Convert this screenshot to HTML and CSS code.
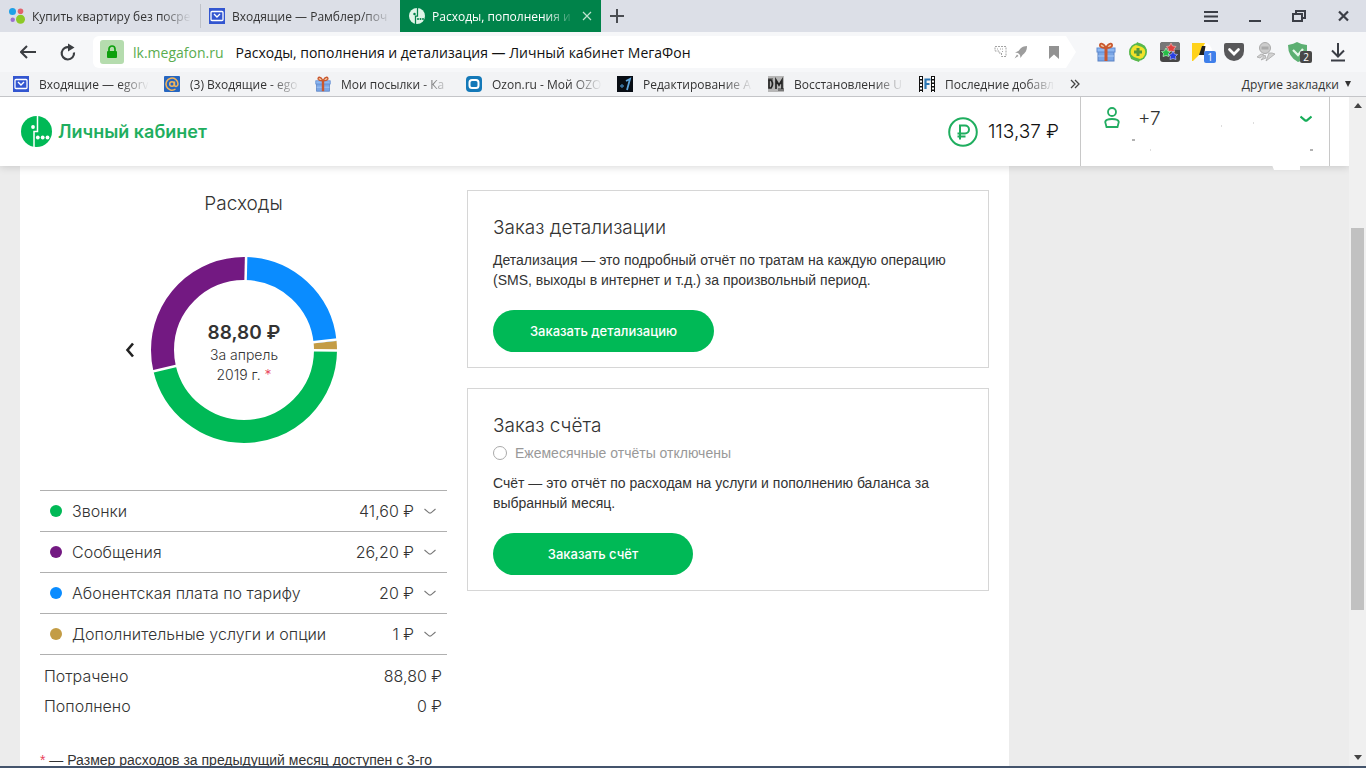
FILE: index.html
```html
<!DOCTYPE html>
<html lang="ru">
<head>
<meta charset="utf-8">
<meta name="viewport" content="width=device-width, initial-scale=1">
<title>Расходы, пополнения и детализация — Личный кабинет МегаФон</title>
<link rel="stylesheet" href="styles.css">
</head>
<body>
<svg class="defs" width="0" height="0" aria-hidden="true">
  <symbol id="mail" viewBox="0 0 16 16"><rect width="16" height="16" fill="#3356d0"/><rect x="2" y="3.500" width="12" height="9" rx="1" fill="none" stroke="#fff" stroke-width="1.300"/><path d="M5 6l3 3 3-3" fill="none" stroke="#fff" stroke-width="1.400"/></symbol>
  <symbol id="gift" viewBox="0 0 20 20"><rect x="2" y="9" width="16" height="10" fill="#7aa6e6" stroke="#5b82c4"/><rect x="1" y="6" width="18" height="4" fill="#8db8f2" stroke="#5f8ad0"/><path d="M2 14h16" stroke="#a9cbf7"/><path d="M10 6v13" stroke="#c9572e" stroke-width="3"/><path d="M10 6C7 0 3 1 4 4c1 2 4 2 6 2s5 0 6-2c1-3-3-4-6 2z" fill="#f4c9a0" stroke="#c9572e" stroke-width="1.700"/></symbol>
  <symbol id="down" viewBox="0 0 12 8"><path d="M.5 2L5 5.800Q6 6.500 7 5.800L11.500 2" fill="none" stroke="currentColor" stroke-width="1.100"/></symbol>
</svg>

<div class="tabs">
  <a class="tab" href="#"><svg class="fav" viewBox="0 0 16 16"><circle cx="3.500" cy="3.500" r="3.500" fill="#1ea0e6"/><circle cx="11.500" cy="3.300" r="2.800" fill="#e2636c"/><circle cx="3.700" cy="11.800" r="2.200" fill="#9b6fd0"/><circle cx="11.500" cy="11.300" r="4.500" fill="#8dc926"/></svg><span class="fade">Купить квартиру без посре</span></a>
  <a class="tab tab-line" href="#"><svg class="fav"><use href="#mail"/></svg><span class="fade">Входящие — Рамблер/поч</span></a>
  <div class="tab tab-on"><svg class="fav" viewBox="0 0 32 32"><circle cx="16" cy="16" r="16" fill="#dff5e8"/><path d="M17 0v16h-4v16" fill="none" stroke="#00834a" stroke-width="2.500"/><g fill="#00834a"><circle cx="11" cy="12" r="2.500"/><circle cx="18" cy="22" r="2"/><circle cx="23" cy="22" r="2"/><circle cx="28" cy="22" r="2"/></g></svg><span class="fade">Расходы, пополнения и</span><button class="plain" aria-label="Закрыть вкладку"><svg width="10" height="10" viewBox="0 0 10 10"><path d="M1 1l8 8M9 1L1 9" stroke="#bfe3cf" stroke-width="1.200"/></svg></button></div>
  <button class="plain new-tab" aria-label="Новая вкладка"><svg width="14" height="14" viewBox="0 0 14 14"><path d="M7 0v14M0 7h14" stroke="#4a4d52" stroke-width="2"/></svg></button>
  <div class="window-buttons">
    <button class="plain" aria-label="Меню"><svg width="16" height="14" viewBox="0 0 16 14"><path d="M1 3h14M1 7.500h14M1 12h14" stroke="#3b3e46" stroke-width="1.800"/></svg></button>
    <button class="plain" aria-label="Свернуть"><svg width="16" height="14" viewBox="0 0 16 14"><path d="M2 12h12" stroke="#3b3e46" stroke-width="2"/></svg></button>
    <button class="plain" aria-label="Восстановить"><svg width="16" height="14" viewBox="0 0 16 14"><path d="M2 5h9v7H2zM5 5V2h9v7h-3" fill="none" stroke="#3b3e46" stroke-width="2"/></svg></button>
    <button class="plain" aria-label="Закрыть"><svg width="16" height="14" viewBox="0 0 16 14"><path d="M4 2.500l9 9M13 2.500l-9 9" stroke="#3b3e46" stroke-width="2.200"/></svg></button>
  </div>
</div>

<div class="toolbar">
  <button class="plain" aria-label="Назад"><svg width="18" height="16" viewBox="0 0 18 16"><path d="M16 8H1M7 2L1 8l6 6" fill="none" stroke="#3b3e42" stroke-width="2"/></svg></button>
  <button class="plain reload" aria-label="Обновить"><svg width="16" height="18" viewBox="0 0 16 18"><path d="M9.500 4.300A6.200 6.200 0 1 0 14 9.500" fill="none" stroke="#3b3e42" stroke-width="2.200"/><path d="M8 .5L14.500 4.500 8 8.500z" fill="#3b3e42"/></svg></button>
  <div class="address">
    <span class="lock"><svg width="12" height="14" viewBox="0 0 12 14"><rect x="1" y="6" width="10" height="7" rx="1" fill="#0da00d"/><path d="M3 7V4a3 3 0 0 1 6 0v3" fill="none" stroke="#0da00d" stroke-width="1.700"/></svg></span>
    <label class="host" for="addr">lk.megafon.ru</label>
    <input id="addr" type="text" value="Расходы, пополнения и детализация — Личный кабинет МегаФон">
    <svg width="14" height="14" viewBox="0 0 14 14" fill="none" stroke="#a3a3a3"><path d="M1 1.500h11v10H7.500V8H5V6H1z" stroke-dasharray="2 1"/><path d="M3 4h2M6 4h4M8 6.500h2" stroke-dasharray="1 1"/></svg>
    <svg width="14" height="14" viewBox="0 0 14 14" fill="#9d9d9d"><path d="M13 1C8 1 6 4 4.500 6L1 7.500l3 .5 2 2 .5 3L8.500 10C11 8 13 6 13 1zM3 9.500L.5 13.500 4.500 11z"/></svg>
    <svg class="flag" width="10" height="14" viewBox="0 0 10 14"><path d="M0 1h10v13L5 9.500 0 14z" fill="#929292"/></svg>
  </div>
  <div class="extensions">
    <button class="plain" aria-label="Посылки"><svg width="20" height="20"><use href="#gift"/></svg></button>
    <button class="plain" aria-label="Монета"><svg width="20" height="20" viewBox="0 0 20 20"><circle cx="10" cy="10" r="9" fill="#58b84c"/><circle cx="10" cy="10" r="7.300" fill="#f2e22a"/><path d="M9 0L17 4 19 9 14 5 8 3zM11 20L3 17 1 11l5 4 6 2z" fill="#58b84c"/><path d="M10 6v8M6 10h8" stroke="#53983c" stroke-width="3"/></svg></button>
    <button class="plain" aria-label="Звёзды"><svg width="20" height="20" viewBox="0 0 20 20"><rect width="20" height="20" rx="3" fill="#464646"/><path d="M0 3a3 3 0 0 1 3-3h14a3 3 0 0 1 3 3v5H0z" fill="#777"/><path d="M11 1l1.500 3 3.500.5-2 2.500.5 3-3.500-1-3 1 .5-3-2-2.500L9.500 4z" fill="#e1413f" stroke="#ffc1bd" stroke-width=".6"/><path d="M6 6l1.500 3 3 .5-2 2 .5 3-3-1-3 1 .5-3-2-2 3-.5z" fill="#25bd46" stroke="#d1ffd8" stroke-width=".6"/><path d="M13 9l1.500 3 3 .5-2 2 .5 3-3-1-3 1 .5-3-2-2 3-.5z" fill="#273ee3" stroke="#cbd0ff" stroke-width=".6"/></svg></button>
    <button class="plain badge-box" aria-label="Музыка"><svg width="20" height="20" viewBox="0 0 20 20"><circle cx="12" cy="9" r="8" fill="#fff"/><path d="M0 1h13L8 12 1 19H0z" fill="#ffd21c"/><path d="M10 4h3.500l-1.500 9H7z" fill="#222"/></svg><span class="badge">1</span></button>
    <button class="plain" aria-label="Pocket"><svg width="20" height="20" viewBox="0 0 20 20"><path d="M2 1h16q2 0 2 2v6a10 10 0 0 1-20 0V3q0-2 2-2z" fill="#58585a"/><path d="M5.500 7.500L10 12l4.500-4.500" fill="none" stroke="#fff" stroke-width="2.700" stroke-linecap="round"/></svg></button>
    <button class="plain" aria-label="Помощник"><svg width="20" height="20" viewBox="0 0 20 20"><circle cx="9" cy="6" r="5.500" fill="#ccc" stroke="#aaa"/><path d="M5.500 4.500h7v3h-7z" fill="#aaa"/><path d="M5 12l-4 3 3 1 4-3zM9 13l-4 5 5-2zM13 11l-3 8 9-7-3-1z" fill="#d2d2d2" stroke="#aaa" stroke-width=".8"/></svg></button>
    <button class="plain badge-box" aria-label="Защита"><svg width="20" height="20" viewBox="0 0 20 20"><path d="M0 3Q6 2 9 0q5 3 10 3v6q-2 9-9 11Q0 15 0 3z" fill="#5caf72"/><path d="M5 8l5 5 5-6" fill="none" stroke="#e5f6e9" stroke-width="2.200"/></svg><span class="badge badge-dark">2</span></button>
    <button class="plain downloads" aria-label="Загрузки"><svg width="16" height="20" viewBox="0 0 16 20"><path d="M8 1v13M2 8.500L8 14.500 14 8.500M1 18.500h14" fill="none" stroke="#3b3e46" stroke-width="2"/></svg></button>
  </div>
</div>

<div class="bookmarks">
  <a class="mark" href="#"><svg class="fav"><use href="#mail"/></svg><span class="fade">Входящие — egorv</span></a>
  <a class="mark" href="#"><svg class="fav" viewBox="0 0 16 16"><rect width="16" height="16" rx="1" fill="#2666c0"/><g fill="none" stroke="#f3b55a" stroke-width="1.500"><circle cx="8" cy="8" r="2.300"/><path d="M10.500 5.500V9q0 1.500 1.500 1.500 2-.500 2-2.500A6 6 0 1 0 11.500 13"/></g></svg><span class="fade">(3) Входящие - ego</span></a>
  <a class="mark" href="#"><svg class="fav"><use href="#gift"/></svg><span class="fade">Мои посылки - Ка</span></a>
  <a class="mark" href="#"><svg class="fav" viewBox="0 0 16 16"><rect width="16" height="16" rx="4" fill="#1479b8"/><rect x="3.500" y="4" width="9" height="8" rx="2.500" fill="#1479b8" stroke="#fff" stroke-width="2"/></svg><span class="fade">Ozon.ru - Мой OZO</span></a>
  <a class="mark" href="#"><svg class="fav" viewBox="0 0 16 16"><rect width="16" height="16" fill="#080d14"/><path d="M9 5l4-2-3 11" fill="none" stroke="#5fa5dc" stroke-width="1.800"/><path d="M3 10h4M5 8v4" stroke="#3d78a8" stroke-width="1.300"/></svg><span class="fade">Редактирование A</span></a>
  <a class="mark" href="#"><svg class="fav" viewBox="0 0 16 16"><rect width="16" height="16" fill="#b7b7b7"/><path d="M0 2h5v3H0zM10 12h6v3h-6z" fill="#777"/><path d="M1 4v8h2q3-4 0-8zM8 13V4l3 5 3-5v9" fill="none" stroke="#252525" stroke-width="1.700"/></svg><span class="fade">Восстановление U</span></a>
  <a class="mark" href="#"><svg class="fav" viewBox="0 0 16 16"><path d="M0 0h4v16H0zM12 0h4v16h-4z" fill="#111"/><path d="M2 1v15M14 1v15" stroke="#fff" stroke-width="2" stroke-dasharray="2 1.500"/><path d="M6.500 13V3.500h5M6.500 8h4" fill="none" stroke="#2b77b4" stroke-width="2.200"/></svg><span class="fade">Последние добавл</span></a>
  <button class="plain" aria-label="Ещё закладки"><svg width="10" height="10" viewBox="0 0 10 10"><path d="M1 1l4 4-4 4M5 1l4 4-4 4" fill="none" stroke="#444" stroke-width="1.300"/></svg></button>
  <button class="plain other">Другие закладки <svg width="6" height="6" viewBox="0 0 6 6"><path d="M0 0h6L3 6z" fill="#333"/></svg></button>
</div>

<div class="viewport">
  <div class="page">
    <header class="header">
      <a class="brand" href="#"><svg width="31" height="31" viewBox="0 0 31 31"><circle cx="15.500" cy="15.500" r="15.500" fill="#00b956"/><path d="M16.500 0v15.500H13V31" fill="none" stroke="#fff" stroke-width="1.500"/><g fill="#fff"><circle cx="12" cy="11" r="1.900"/><circle cx="16.800" cy="21.500" r="1.900"/><circle cx="21.700" cy="21.500" r="1.900"/><circle cx="26.500" cy="21.500" r="1.900"/></g></svg>Личный кабинет</a>
      <div class="balance"><svg width="30" height="30" viewBox="0 0 30 30" fill="none" stroke="#1fae5f"><circle cx="15" cy="15" r="13.800" stroke-width="2"/><path d="M12 22.500V8.500h5a4 4 0 0 1 0 8H9.500M9.500 19.500h8" stroke-width="2"/></svg>113,37 ₽</div>
      <button class="plain user"><svg width="16" height="21" viewBox="0 0 16 21" fill="none" stroke="#23ad62" stroke-width="1.800"><circle cx="8" cy="5" r="4"/><path d="M2.500 20L1.200 15q.5-3 6.800-3t6.800 3l-1.300 5z"/></svg><span>+7</span><svg class="user-arrow" width="12" height="8" viewBox="0 0 12 8"><path d="M.5 1.500L5 5.300Q6 6.100 7 5.300L11.500 1.500" fill="none" stroke="#16ad59" stroke-width="2.200"/></svg>
        <svg class="specks" viewBox="0 0 248 74" aria-hidden="true"><path d="M191 68h28v5h-26z" fill="#fff"/><path d="M51 43h3M229 53h3" stroke="#999" stroke-width="1.300"/><path d="M140 29h1M172 26h1M69 53h1" stroke="#bbb"/></svg></button>
    </header>

    <main class="content">
      <section class="costs">
        <h2>Расходы</h2>
        <div class="chart-row">
          <button class="plain prev" aria-label="Предыдущий месяц"><svg width="10" height="16" viewBox="0 0 10 16"><path d="M8 1.500L2.500 8 8 14.500" fill="none" stroke="#222" stroke-width="2.600"/></svg></button>
          <div class="donut">
            <svg viewBox="0 0 186 186" role="img" aria-label="Расходы по категориям">
              <g fill="none" stroke-width="23" transform="rotate(-90 93 93)">
                <circle cx="93" cy="93" r="81.500" pathLength="360" stroke="#731982" stroke-dasharray="104.500 255.500" stroke-dashoffset="-256.800"/>
                <circle cx="93" cy="93" r="81.500" pathLength="360" stroke="#0a8cff" stroke-dasharray="83 277" stroke-dashoffset="-1.300"/>
                <circle cx="93" cy="93" r="81.500" pathLength="360" stroke="#c39c45" stroke-dasharray="6 354" stroke-dashoffset="-84.300"/>
                <circle cx="93" cy="93" r="81.500" pathLength="360" stroke="#00b956" stroke-dasharray="166.500 193.500" stroke-dashoffset="-90.300"/>
              </g>
              <g stroke="#fff" stroke-width="2.500"><path d="M93 24V-1" transform="rotate(1.300 93 93)"/><path d="M93 24V-1" transform="rotate(83.500 93 93)"/><path d="M93 24V-1" transform="rotate(90.300 93 93)"/><path d="M93 24V-1" transform="rotate(256.800 93 93)"/></g>
            </svg>
            <p class="donut-text"><strong>88,80 ₽</strong>За апрель<br>2019 г. <span class="star">*</span></p>
          </div>
        </div>
        <ul class="kinds">
          <li><button class="plain kind"><i class="dot green"></i><span class="name">Звонки</span><span>41,60 ₽</span><svg width="12" height="8"><use href="#down"/></svg></button></li>
          <li><button class="plain kind"><i class="dot purple"></i><span class="name">Сообщения</span><span>26,20 ₽</span><svg width="12" height="8"><use href="#down"/></svg></button></li>
          <li><button class="plain kind"><i class="dot blue"></i><span class="name">Абонентская плата по тарифу</span><span>20 ₽</span><svg width="12" height="8"><use href="#down"/></svg></button></li>
          <li><button class="plain kind"><i class="dot gold"></i><span class="name">Дополнительные услуги и опции</span><span>1 ₽</span><svg width="12" height="8"><use href="#down"/></svg></button></li>
        </ul>
        <dl class="totals">
          <div><dt>Потрачено</dt><dd>88,80 ₽</dd></div>
          <div><dt>Пополнено</dt><dd>0 ₽</dd></div>
        </dl>
        <p class="note"><span class="star">*</span> — Размер расходов за предыдущий месяц доступен с 3-го</p>
      </section>

      <div class="orders">
        <section class="card">
          <h2>Заказ детализации</h2>
          <p>Детализация — это подробный отчёт по тратам на каждую операцию (SMS, выходы в интернет и т.д.) за произвольный период.</p>
          <button class="order wide">Заказать детализацию</button>
        </section>
        <section class="card">
          <h2>Заказ счёта</h2>
          <div class="option"><input type="radio" id="monthly"><label for="monthly">Ежемесячные отчёты отключены</label></div>
          <p>Счёт — это отчёт по расходам на услуги и пополнению баланса за выбранный месяц.</p>
          <button class="order">Заказать счёт</button>
        </section>
      </div>
    </main>
  </div>
  <div class="scrollbar" aria-hidden="true">
    <svg width="8" height="5" viewBox="0 0 8 5"><path d="M0 5L4 0l4 5z" fill="#444"/></svg>
    <div class="track"><div class="thumb"></div></div>
    <svg width="8" height="5" viewBox="0 0 8 5"><path d="M0 0h8L4 5z" fill="#444"/></svg>
  </div>
</div>
</body>
</html>
```
FILE: styles.css
```css
* { box-sizing: border-box; }

body {
  margin: 0;
  height: 100vh;
  display: flex;
  flex-direction: column;
  overflow: hidden;
  font-family: "Open Sans", "Noto Sans", sans-serif;
  font-size: 12px;
  color: #333;
  background: #f2f3f5;
  border-bottom: 2px solid #44546c;
}

svg { display: block; flex: none; }
.defs { position: absolute; }
a { color: inherit; text-decoration: none; }
h2, p, ul, dl, dd { margin: 0; padding: 0; }

.plain {
  border: 0;
  padding: 0;
  background: none;
  font: inherit;
  color: inherit;
  display: flex;
  align-items: center;
  justify-content: center;
}

.fav { width: 16px; height: 16px; }

.fade {
  flex: 1;
  min-width: 0;
  overflow: hidden;
  white-space: nowrap;
  mask-image: linear-gradient(to left, transparent, #000 30px);
}

/* Tab strip */
.tabs {
  display: flex;
  height: 32px;
  flex: none;
  background: #dcdfe7;
}

.tab {
  display: flex;
  align-items: center;
  gap: 7px;
  width: 200px;
  padding: 0 9px;
}

.tab-line {
  height: 24px;
  align-self: center;
  padding-left: 8px;
  border-left: 1px solid #bfc2c9;
}

.tab-on { width: 201px; background: #00834a; color: #fff; }
.new-tab { width: 32px; }

.window-buttons {
  display: flex;
  gap: 28px;
  margin-left: auto;
  padding-right: 15px;
}

/* Toolbar */
.toolbar {
  display: flex;
  align-items: center;
  height: 40px;
  flex: none;
  padding: 0 20px;
  background: #f6f7f9;
}

.reload { margin: 0 17px 0 22px; }

.address {
  flex: 1;
  display: flex;
  align-items: center;
  gap: 6px;
  height: 32px;
  padding: 0 17px 0 7px;
  font-size: 14px;
  background: #fff;
  border-radius: 6px 0 0 6px;
  clip-path: polygon(0 0, calc(100% - 10px) 0, 100% 50%, calc(100% - 10px) 100%, 0 100%);
}

.lock {
  display: flex;
  align-items: center;
  justify-content: center;
  width: 24px;
  height: 24px;
  border-radius: 3px;
  background: #b5dcae;
}

.host { margin: 0 6px 0 3px; color: #5aac4f; }

.address input {
  flex: 1;
  min-width: 0;
  border: 0;
  padding: 0;
  background: none;
  font: inherit;
  color: #111;
  outline: 0;
}

.flag { margin-left: 15px; }

.extensions {
  display: flex;
  gap: 12px;
  margin-left: 20px;
}

.downloads { margin-left: 10px; }

.badge-box { position: relative; }

.badge {
  position: absolute;
  right: -4px;
  bottom: -1px;
  width: 12px;
  height: 12px;
  border-radius: 2px;
  background: #3f7fea;
  color: #fff;
  font-size: 10px;
  line-height: 12px;
}

.badge-dark { background: #484848; }

/* Bookmarks bar */
.bookmarks {
  display: flex;
  align-items: center;
  height: 25px;
  flex: none;
  padding: 0 15px 0 13px;
  border-bottom: 1px solid #c4c5c8;
}

.mark {
  display: flex;
  align-items: center;
  gap: 10px;
  width: 151px;
  padding-right: 15px;
}

.other { margin-left: auto; gap: 6px; }

/* Site */
.viewport {
  flex: 1;
  min-height: 0;
  display: flex;
  font-family: Inter, "Liberation Sans", sans-serif;
}

.page {
  flex: 1;
  min-width: 0;
  overflow: hidden;
  background: #ececec;
}

.header {
  position: relative;
  display: flex;
  align-items: center;
  height: 69px;
  padding: 0 19px 0 21px;
  background: #fff;
  box-shadow: 0 1px 8px rgba(0, 0, 0, .16);
}

.brand {
  display: flex;
  align-items: center;
  gap: 6px;
  font-size: 18px;
  font-weight: 600;
  color: #1fae5f;
}

.balance {
  display: flex;
  align-items: center;
  gap: 10px;
  margin: 0 21px 0 auto;
  font-size: 19px;
  font-weight: 300;
  color: #111;
}

.user {
  position: relative;
  align-self: stretch;
  align-items: flex-start;
  justify-content: flex-start;
  gap: 18px;
  width: 250px;
  padding: 10px 17px 0 23px;
  border: solid #c8c8c8;
  border-width: 0 1px;
  font-size: 19px;
  font-weight: 300;
}

.user-arrow { margin: 8px 0 0 auto; }

.specks {
  position: absolute;
  left: 0;
  top: 0;
  width: 100%;
}

.content {
  display: grid;
  grid-template-columns: minmax(0, 407fr) minmax(0, 522fr);
  gap: 20px;
  max-width: 989px;
  margin-left: 20px;
  padding: 24px 20px;
  background: #fff;
}

h2 {
  font-size: 19px;
  font-weight: 300;
  line-height: 24px;
}

.costs h2 { line-height: 28px; text-align: center; }

.chart-row {
  display: flex;
  align-items: center;
  justify-content: center;
  gap: 16px;
  padding: 39px 25px 47px 0;
}

.donut { position: relative; width: 186px; }

.donut-text {
  position: absolute;
  inset: 0;
  padding-top: 64px;
  font-size: 14px;
  font-weight: 300;
  line-height: 20px;
  text-align: center;
}

.donut-text strong {
  display: block;
  font-size: 19px;
  font-weight: 600;
  line-height: 24px;
}

.star { color: #e8435a; }

.kinds {
  list-style: none;
  border-bottom: 1px solid #b0b0b0;
}

.kinds li { border-top: 1px solid #b0b0b0; }

.kind {
  width: 100%;
  height: 40px;
  gap: 10px;
  padding: 0 11px 0 10px;
  font-size: 16px;
  font-weight: 300;
}

.kind svg { color: #777; }
.name { flex: 1; text-align: left; }

.dot { width: 12px; height: 12px; border-radius: 50%; }
.green { background: #00b956; }
.purple { background: #731982; }
.blue { background: #0a8cff; }
.gold { background: #c39c45; }

.totals {
  padding: 6px 5px 0 4px;
  font-size: 16px;
  font-weight: 300;
  line-height: 30px;
}

.totals div { display: flex; justify-content: space-between; }

.note {
  margin-top: 29px;
  font: 14px/20px "Liberation Sans", sans-serif;
  white-space: nowrap;
}

.orders {
  display: flex;
  flex-direction: column;
  align-items: stretch;
  gap: 20px;
}

.card {
  padding: 25px 25px 15px;
  border: 1px solid #d6d6d6;
}

.card p {
  margin: 10px 0 20px;
  font: 14px/20px "Liberation Sans", sans-serif;
}

.option {
  display: flex;
  align-items: center;
  gap: 8px;
  margin-top: 5px;
  font: 14px/20px "Liberation Sans", sans-serif;
  color: #999;
}

.option input {
  appearance: none;
  width: 14px;
  height: 14px;
  margin: 0;
  border: 1px solid #aaa;
  border-radius: 50%;
}

.order {
  display: block;
  min-width: 200px;
  height: 42px;
  border: 0;
  border-radius: 21px;
  background: #00b956;
  color: #fff;
  font: 500 13px Inter, "Liberation Sans", sans-serif;
}

.wide { min-width: 221px; }

.scrollbar {
  display: flex;
  flex-direction: column;
  align-items: center;
  width: 17px;
  padding: 6px 0;
  gap: 5px;
  background: #f0f0f0;
}

.track {
  flex: 1;
  align-self: stretch;
  padding: 0 2px;
}

.thumb {
  height: 60%;
  background: #c1c1c1;
}

.track::before {
  content: "";
  display: block;
  height: 18%;
}
```
